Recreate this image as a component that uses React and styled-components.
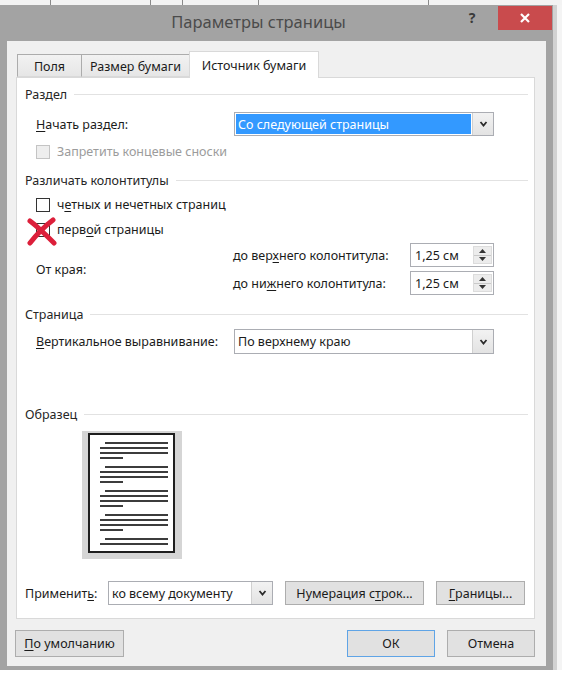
import React from 'react';
import styled, { createGlobalStyle } from 'styled-components';

const Global = createGlobalStyle`
  html, body { margin: 0; padding: 0; background: #ffffff; }
  body { font-family: "Noto Sans", "Liberation Sans", sans-serif; }
  * { box-sizing: border-box; }
`;

const Page = styled.div`
  width: 562px;
  height: 682px;
  overflow: hidden;
  display: flex;
  flex-direction: column;
  background: #ffffff;
`;

const Backdrop = styled.div`
  height: 5px;
  flex: none;
  display: flex;
  background: #f3f3f3;
`;

const Tick = styled.div`
  width: ${p => p.$w}px;
  flex: none;
  border-right: 1px solid #8a8a8a;
`;

const MainRow = styled.div`
  display: flex;
  flex: none;
`;

const Window = styled.div`
  width: 553px;
  height: 665px;
  flex: none;
  background: #a3a3a3;
  display: flex;
  flex-direction: column;
  padding: 0 7px 4px 7px;
`;

const TitleBar = styled.div`
  height: 36px;
  flex: none;
  display: flex;
  align-items: flex-start;
  margin: 0 -6px 0 -7px;
`;

const Title = styled.div`
  flex: 1;
  text-align: center;
  padding-top: 5px;
  padding-left: 60px;
  font-size: 16.5px;
  color: #4b4b4b;
`;

const HelpBtn = styled.div`
  width: 30px;
  padding-top: 3px;
  font-size: 14px;
  font-weight: 700;
  color: #3a3a3a;
  text-align: center;
  margin-right: 11px;
`;

const CloseBtn = styled.div`
  width: 54px;
  height: 24px;
  margin-top: 1px;
  background: #c94b4d;
  color: #ffffff;
  display: flex;
  align-items: center;
  justify-content: center;
`;

const RightEdge = styled.div`
  flex: 1;
  height: 665px;
  background: #f4f4f4;
  border-left: 4px solid #d2d2d2;
`;

const Content = styled.div`
  flex: 1;
  background: #f0f0f0;
  display: flex;
  flex-direction: column;
  padding: 9px 11px 0 9px;
  font-size: 12.5px;
  color: #1b1b1b;
`;

const Tabs = styled.div`
  display: flex;
  align-items: flex-end;
  height: 27px;
  padding-left: 1px;
  position: relative;
  z-index: 2;
`;

const Tab = styled.div`
  width: ${p => p.$w}px;
  height: ${p => (p.$active ? 27 : 23)}px;
  margin-bottom: ${p => (p.$active ? -1 : 0)}px;
  display: flex;
  align-items: center;
  justify-content: center;
  padding-top: ${p => (p.$active ? 0 : 1)}px;
  background: ${p => (p.$active ? '#ffffff' : 'linear-gradient(#f2f2f2, #e6e6e6)')};
  border: 1px solid ${p => (p.$active ? '#d9d9d9' : '#acacac')};
  border-bottom: ${p => (p.$active ? 'none' : '1px solid #d9d9d9')};
  border-right-width: ${p => (p.$last ? 1 : 0)}px;
  color: #1b1b1b;
  white-space: nowrap;
`;

const Panel = styled.div`
  width: 519px;
  height: 542px;
  flex: none;
  background: #ffffff;
  border: 1px solid #d9d9d9;
  display: flex;
  flex-direction: column;
  padding: 8px 6px 0 8px;
`;

const SectionHeader = styled.div`
  height: 16px;
  margin-top: ${p => p.$mt || 0}px;
  display: flex;
  align-items: center;
  gap: 7px;
  color: #262626;
  white-space: nowrap;
  &::after {
    content: '';
    flex: 1;
    height: 1px;
    background: #e2e2e2;
  }
`;

const Row = styled.div`
  display: flex;
  align-items: center;
  margin-top: ${p => p.$mt || 0}px;
  margin-left: ${p => p.$ml || 0}px;
  position: relative;
  white-space: nowrap;
`;

const Label = styled.div`
  width: ${p => (p.$w ? `${p.$w}px` : 'auto')};
  flex: none;
  color: ${p => (p.$disabled ? '#9c9c9c' : '#1b1b1b')};
`;

const Acc = styled.span`
  text-decoration: underline;
  text-underline-offset: 2px;
`;

const Combo = styled.div`
  width: ${p => p.$w}px;
  height: ${p => p.$h}px;
  flex: none;
  display: flex;
  border: 1px solid #abadb3;
  background: #ffffff;
`;

const ComboValue = styled.div`
  flex: 1;
  display: flex;
  align-items: center;
  padding: 1px;
`;

const ComboText = styled.div`
  height: 100%;
  flex: 1;
  display: flex;
  align-items: center;
  padding-left: 2px;
  background: ${p => (p.$selected ? '#3399ff' : 'transparent')};
  color: ${p => (p.$selected ? '#ffffff' : '#1b1b1b')};
`;

const DropBtn = styled.div`
  width: 21px;
  flex: none;
  display: flex;
  align-items: center;
  justify-content: center;
  border-left: 1px solid #d0d0d0;
  background: linear-gradient(#f2f2f2, #e3e3e3);
`;

const Check = styled.div`
  width: 14px;
  height: 14px;
  flex: none;
  margin-right: 7px;
  border: 1px solid ${p => (p.$disabled ? '#c4c4c4' : '#333333')};
  background: ${p => (p.$disabled ? '#eeeeee' : '#ffffff')};
`;

const CrossMark = styled.svg`
  position: absolute;
  left: -9px;
  top: -4px;
  width: 30px;
  height: 29px;
`;

const OffsetBlock = styled.div`
  display: flex;
  align-items: center;
  margin-top: 5px;
  margin-left: 11px;
`;

const SpinList = styled.div`
  display: flex;
  flex-direction: column;
  gap: 4px;
`;

const SpinRow = styled.div`
  display: flex;
  align-items: center;
  white-space: nowrap;
`;

const Spinner = styled.div`
  width: 84px;
  height: 24px;
  display: flex;
  border: 1px solid #abadb3;
  background: #ffffff;
`;

const SpinValue = styled.div`
  flex: 1;
  display: flex;
  align-items: center;
  padding-left: 4px;
`;

const SpinBtns = styled.div`
  width: 19px;
  flex: none;
  margin: 2px 1px 2px 0;
  display: flex;
  flex-direction: column;
  background: #ececec;
  border: 1px solid #dcdcdc;
`;

const SpinHalf = styled.div`
  flex: 1;
  display: flex;
  align-items: center;
  justify-content: center;
  border-top: ${p => (p.$down ? '1px solid #c9c9c9' : 'none')};
`;

const Preview = styled.div`
  width: 100px;
  height: 128px;
  margin: 9px 0 0 57px;
  padding: 2px 7px 6px 6px;
  background: #d5d5d5;
  flex: none;
`;

const Sheet = styled.div`
  width: 100%;
  height: 100%;
  background: #ffffff;
  border: 2px solid #1e1e1e;
  padding: 7px 0 0 10px;
  display: flex;
  flex-direction: column;
  gap: 7px;
`;

const Para = styled.div`
  display: flex;
  flex-direction: column;
  gap: 3px;
`;

const Line = styled.div`
  height: 2px;
  background: #3c3c3c;
  margin-left: ${p => (p.$indent ? 5 : 0)}px;
  width: ${p => (p.$short ? 23 : p.$indent ? 63 : 68)}px;
`;

const Button = styled.div`
  width: ${p => p.$w}px;
  height: ${p => p.$h}px;
  margin-left: ${p => p.$ml || 0}px;
  flex: none;
  display: flex;
  align-items: center;
  justify-content: center;
  background: #e1e1e1;
  border: 1px solid ${p => (p.$default ? '#5fa4e6' : '#adadad')};
  color: #1b1b1b;
  white-space: nowrap;
`;

const BottomRow = styled.div`
  display: flex;
  align-items: center;
  margin-top: 11px;
  margin-left: -1px;
`;

const Spacer = styled.div`
  flex: 1;
`;

const Chevron = () => (
  <svg width="9" height="6" viewBox="0 0 9 6">
    <path d="M1.5 1 L4.5 4.5 L7.5 1" fill="none" stroke="#2b2b2b" strokeWidth="1.8" />
  </svg>
);

const Arrow = ({ down }) => (
  <svg width="7" height="4" viewBox="0 0 7 4">
    <path d={down ? 'M0 0 L7 0 L3.5 4 Z' : 'M0 4 L7 4 L3.5 0 Z'} fill="#333" />
  </svg>
);

const Spin = ({ value }) => (
  <Spinner>
    <SpinValue>{value}</SpinValue>
    <SpinBtns>
      <SpinHalf><Arrow /></SpinHalf>
      <SpinHalf $down><Arrow down /></SpinHalf>
    </SpinBtns>
  </Spinner>
);

const ComboBox = ({ w, h, children, selected }) => (
  <Combo $w={w} $h={h}>
    <ComboValue>
      <ComboText $selected={selected}>{children}</ComboText>
    </ComboValue>
    <DropBtn><Chevron /></DropBtn>
  </Combo>
);

const paragraphs = [4, 4, 4, 4, 2];

export default function App() {
  return (
    <Page>
      <Global />
      <Backdrop>
        <Tick $w={51} />
        <Tick $w={100} />
        <Tick $w={32} />
        <Tick $w={76} />
        <Tick $w={170} />
      </Backdrop>
      <MainRow>
        <Window>
          <TitleBar>
            <Title>Параметры страницы</Title>
            <HelpBtn>?</HelpBtn>
            <CloseBtn>
              <svg width="10" height="10" viewBox="0 0 10 10">
                <path d="M1 1 L9 9 M9 1 L1 9" stroke="#fff" strokeWidth="2.2" />
              </svg>
            </CloseBtn>
          </TitleBar>
          <Content>
            <Tabs>
              <Tab $w={64}>Поля</Tab>
              <Tab $w={108}>Размер бумаги</Tab>
              <Tab $w={130} $active $last>Источник бумаги</Tab>
            </Tabs>
            <Panel>
              <SectionHeader>Раздел</SectionHeader>
              <Row $mt={10} $ml={11}>
                <Label $w={198}><Acc>Н</Acc>ачать раздел:</Label>
                <ComboBox w={260} h={24} selected>Со следующей страницы</ComboBox>
              </Row>
              <Row $mt={7} $ml={11}>
                <Check $disabled />
                <Label $disabled>Запретить концевые сноски</Label>
              </Row>
              <SectionHeader $mt={12}>Различать колонтитулы</SectionHeader>
              <Row $mt={8} $ml={11}>
                <Check />
                <Label>ч<Acc>е</Acc>тных и нечетных страниц</Label>
              </Row>
              <Row $mt={8} $ml={11}>
                <Check />
                <Label>перв<Acc>о</Acc>й страницы</Label>
                <CrossMark viewBox="0 0 30 29">
                  <path d="M3 4 C10 9, 18 17, 27 26" fill="none" stroke="#dc1f3a" strokeWidth="5" strokeLinecap="round" />
                  <path d="M26 3 C18 9, 10 17, 3 26" fill="none" stroke="#dc1f3a" strokeWidth="5" strokeLinecap="round" />
                </CrossMark>
              </Row>
              <OffsetBlock>
                <Label $w={197}>От края:</Label>
                <SpinList>
                  <SpinRow>
                    <Label $w={177}>до вер<Acc>х</Acc>него колонтитула:</Label>
                    <Spin value="1,25 см" />
                  </SpinRow>
                  <SpinRow>
                    <Label $w={177}>до ни<Acc>ж</Acc>него колонтитула:</Label>
                    <Spin value="1,25 см" />
                  </SpinRow>
                </SpinList>
              </OffsetBlock>
              <SectionHeader $mt={11}>Страница</SectionHeader>
              <Row $mt={7} $ml={11}>
                <Label $w={198}><Acc>В</Acc>ертикальное выравнивание:</Label>
                <ComboBox w={260} h={25}>По верхнему краю</ComboBox>
              </Row>
              <SectionHeader $mt={52}>Образец</SectionHeader>
              <Preview>
                <Sheet>
                  {paragraphs.map((n, i) => (
                    <Para key={i}>
                      {Array.from({ length: n }).map((_, j) => (
                        <Line key={j} $indent={j === 0} $short={j === 3} />
                      ))}
                    </Para>
                  ))}
                </Sheet>
              </Preview>
              <Row $mt={22}>
                <Label $w={83}>Применит<Acc>ь</Acc>:</Label>
                <ComboBox w={165} h={24}>ко всему документу</ComboBox>
                <Button $w={139} $h={24} $ml={12}>Нумерация с<Acc>т</Acc>рок...</Button>
                <Button $w={89} $h={24} $ml={12}><Acc>Г</Acc>раницы...</Button>
              </Row>
            </Panel>
            <BottomRow>
              <Button $w={109} $h={27}><Acc>П</Acc>о умолчанию</Button>
              <Spacer />
              <Button $w={88} $h={27} $default>ОК</Button>
              <Button $w={88} $h={27} $ml={12}>Отмена</Button>
            </BottomRow>
          </Content>
        </Window>
        <RightEdge />
      </MainRow>
    </Page>
  );
}
